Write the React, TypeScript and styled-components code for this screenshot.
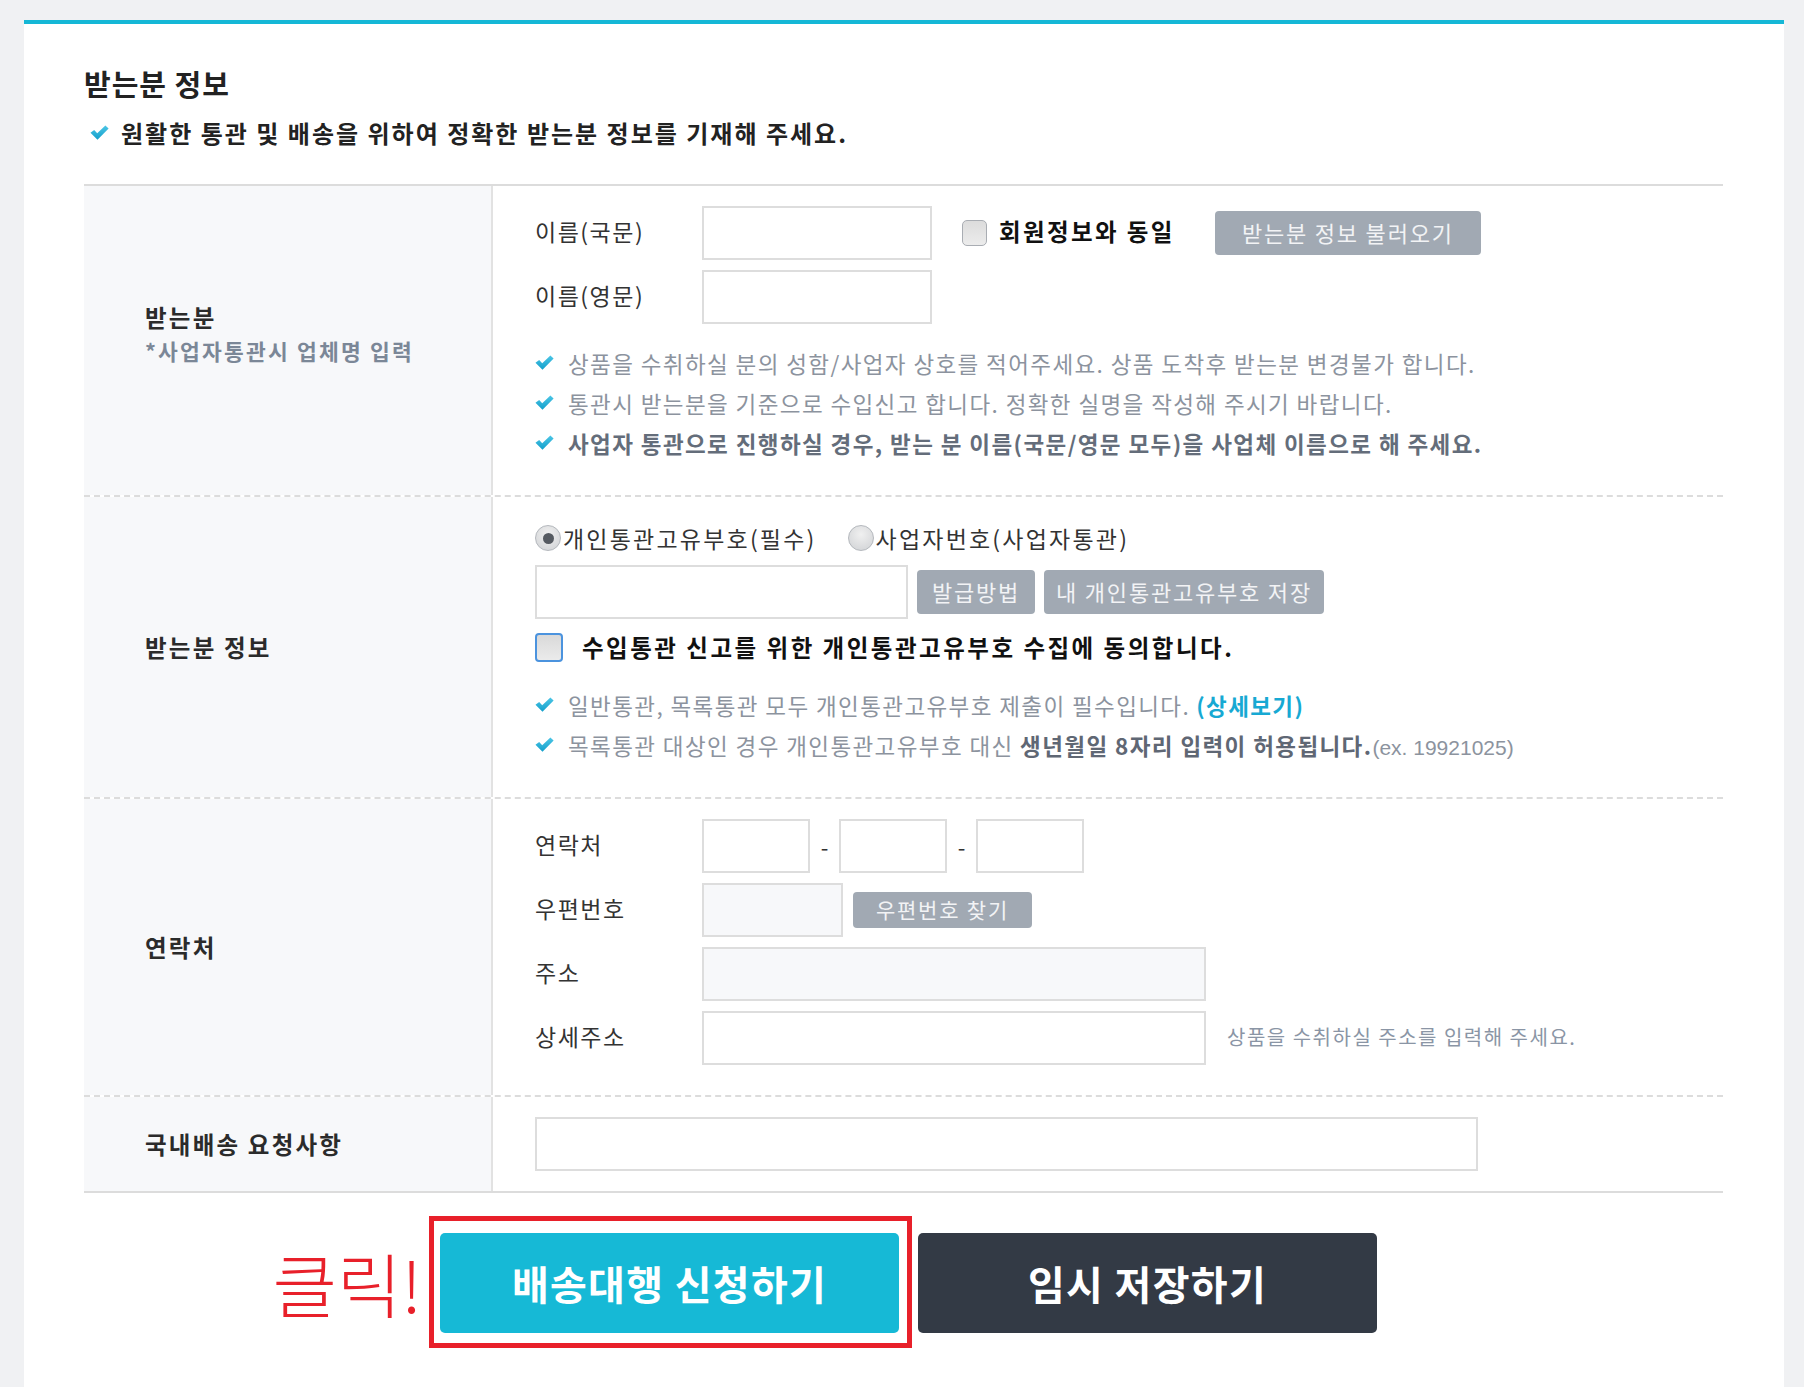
import React from "react";
import styled, { createGlobalStyle, css } from "styled-components";

const FONT = `"Noto Sans CJK KR", "Noto Sans", "Liberation Sans", sans-serif`;

const GlobalStyle = createGlobalStyle`
  html, body { margin: 0; padding: 0; }
  body { background: #f0f1f3; font-family: ${FONT}; color: #333; }
  * { box-sizing: border-box; }
`;

const Page = styled.div`
  min-height: 1387px;
  padding: 20px 20px 0 24px;
`;

const Panel = styled.div`
  background: #fff;
  border-top: 4px solid #15b7d6;
  min-height: 1367px;
  padding: 40px 61px 40px 60px;
`;

const Title = styled.h2`
  margin: 0;
  font-size: 29px;
  line-height: 38px;
  font-weight: 700;
  letter-spacing: 1px;
  color: #222;
`;

const Notice = styled.p`
  margin: 16px 0 0 6px;
  display: flex;
  align-items: center;
  gap: 12px;
  font-size: 24px;
  line-height: 30px;
  font-weight: 700;
  letter-spacing: 2px;
  color: #222;
`;

const Table = styled.div`
  margin-top: 36px;
  border-top: 2px solid #dcdcdc;
  border-bottom: 2px solid #dcdcdc;
`;

const Row = styled.div<{ $first?: boolean }>`
  display: grid;
  grid-template-columns: 409px 1fr;
  ${(p) =>
    !p.$first &&
    css`
      border-top: 2px dashed #dcdcdc;
    `}
`;

const HeadCell = styled.div<{ $lift?: number }>`
  background: #f7f8fa;
  border-right: 2px solid #e2e2e2;
  display: flex;
  flex-direction: column;
  justify-content: center;
  padding-left: 61px;
  padding-bottom: ${(p) => p.$lift ?? 0}px;
`;

const HeadTitle = styled.div`
  font-size: 23.5px;
  line-height: 33px;
  font-weight: 700;
  letter-spacing: 2.2px;
  color: #2b2b2b;
`;

const HeadSub = styled.div`
  font-size: 21.5px;
  line-height: 33px;
  font-weight: 700;
  letter-spacing: 2.2px;
  color: #7b8797;
`;

const BodyCell = styled.div<{ $pad: string }>`
  padding: ${(p) => p.$pad};
  display: flex;
  flex-direction: column;
`;

const FieldStack = styled.div`
  display: flex;
  flex-direction: column;
  gap: 10px;
`;

const FieldLine = styled.div`
  display: flex;
  align-items: center;
  height: 54px;
`;

const FieldLabel = styled.span`
  width: 167px;
  flex: none;
  font-size: 23px;
  letter-spacing: 1.5px;
  color: #333;
  padding-bottom: 5px;
`;

const TextInput = styled.input<{ $w: number; $gray?: boolean }>`
  width: ${(p) => p.$w}px;
  height: 54px;
  flex: none;
  border: 2px solid #dddddd;
  background: ${(p) => (p.$gray ? "#f7f8fa" : "#fff")};
  font-family: ${FONT};
  font-size: 20px;
  padding: 0 10px;
  outline: none;
`;

const SmallCheck = styled.span`
  width: 25px;
  height: 26px;
  margin-left: 30px;
  border: 1.5px solid #a9adb3;
  border-radius: 5px;
  background: linear-gradient(#dcdcdc, #ececec);
  flex: none;
`;

const SameLabel = styled.span`
  margin-left: 12px;
  font-size: 23.5px;
  font-weight: 700;
  letter-spacing: 2.4px;
  color: #111;
  white-space: nowrap;
  padding-bottom: 4px;
`;

const GreyButton = styled.button<{ $w: number; $h?: number; $ml: number }>`
  width: ${(p) => p.$w}px;
  height: ${(p) => p.$h ?? 44}px;
  margin-left: ${(p) => p.$ml}px;
  flex: none;
  border: none;
  border-radius: 4px;
  background: #a1a9b3;
  color: #f2f3f5;
  font-family: ${FONT};
  font-size: ${(p) => ((p.$h ?? 44) < 40 ? 21 : 22)}px;
  letter-spacing: 1.8px;
  white-space: nowrap;
  padding: 0 0 3px;
  cursor: pointer;
`;

const Bullets = styled.ul<{ $mt: number }>`
  list-style: none;
  margin: ${(p) => p.$mt}px 0 0;
  padding: 0;
`;

const Bullet = styled.li<{ $strong?: boolean }>`
  display: flex;
  align-items: center;
  gap: 14px;
  height: 40px;
  font-size: 22.5px;
  letter-spacing: 1.4px;
  color: ${(p) => (p.$strong ? "#646d7a" : "#8c939e")};
  font-weight: ${(p) => (p.$strong ? 700 : 400)};
  white-space: nowrap;
  padding-bottom: 3px;
`;

const Strong = styled.b`
  color: #5f6774;
  font-weight: 700;
`;

const Link = styled.a`
  color: #17a9d3;
  font-weight: 700;
  text-decoration: none;
  margin-left: 6px;
`;

const Latin = styled.span`
  font-family: "Liberation Sans", sans-serif;
  font-size: 21px;
  letter-spacing: 0;
`;

const RadioLine = styled.div`
  display: flex;
  align-items: center;
  height: 34px;
`;

const RadioItem = styled.label<{ $ml?: number }>`
  display: flex;
  align-items: center;
  margin-left: ${(p) => p.$ml ?? 0}px;
  font-size: 23px;
  letter-spacing: 2.2px;
  color: #333;
  white-space: nowrap;
`;

const RadioDot = styled.span<{ $on?: boolean }>`
  width: 26px;
  height: 26px;
  border-radius: 50%;
  border: 1.5px solid #b4b8bd;
  background: radial-gradient(circle at 50% 35%, #f0f0f0, #cfd1d4);
  display: flex;
  align-items: center;
  justify-content: center;
  margin-right: 2px;
  flex: none;
  &::after {
    content: "";
    width: 11px;
    height: 11px;
    border-radius: 50%;
    background: ${(p) => (p.$on ? "#555a61" : "transparent")};
  }
`;

const InputLine = styled.div`
  display: flex;
  align-items: center;
  margin-top: 10px;
`;

const AgreeLine = styled.label`
  display: flex;
  align-items: center;
  margin-top: 11px;
  height: 34px;
  font-size: 23.5px;
  font-weight: 700;
  letter-spacing: 2.5px;
  color: #111;
  gap: 19px;
  white-space: nowrap;
`;

const BigCheck = styled.span`
  width: 28px;
  height: 29px;
  border: 2px solid #4b93de;
  border-radius: 4px;
  background: linear-gradient(#d9d9d9, #ebebeb);
  flex: none;
`;

const Dash = styled.span`
  width: 29px;
  text-align: center;
  font-size: 22px;
  color: #333;
`;

const Hint = styled.span`
  margin-left: 21px;
  font-size: 20px;
  letter-spacing: 1.5px;
  color: #8a95a5;
  white-space: nowrap;
  padding-bottom: 3px;
`;

const Actions = styled.div`
  display: flex;
  justify-content: center;
  gap: 19px;
  margin-top: 40px;
  padding-left: 10px;
`;

const Highlight = styled.div`
  position: relative;
`;

const RedFrame = styled.span`
  position: absolute;
  top: -17px;
  bottom: -15px;
  left: -11px;
  right: -13px;
  border: 5px solid #e8202a;
  pointer-events: none;
`;

const ClickText = styled.span`
  position: absolute;
  right: calc(100% + 18px);
  top: 50%;
  transform: translateY(-50%);
  font-size: 70px;
  line-height: 1;
  font-weight: 300;
  color: #e8202a;
  white-space: nowrap;
`;

const BigButton = styled.button<{ $dark?: boolean }>`
  width: 459px;
  height: 100px;
  border: none;
  border-radius: 5px;
  background: ${(p) => (p.$dark ? "#333a45" : "#16b9d6")};
  color: #fff;
  font-family: ${FONT};
  font-size: 40px;
  font-weight: 700;
  letter-spacing: 1.3px;
  cursor: pointer;
`;

const CheckIcon: React.FC<{ size?: number }> = ({ size = 19 }) => (
  <svg width={size} height={size * 0.8} viewBox="0 0 20 16" style={{ flex: "none" }}>
    <defs>
      <linearGradient id="ckg" x1="0" y1="0" x2="0" y2="1">
        <stop offset="0" stopColor="#4cc6e6" />
        <stop offset="1" stopColor="#139fcb" />
      </linearGradient>
    </defs>
    <path d="M0.5 8.2 L4.4 5.2 L7.6 8.6 L16.2 0.5 L19.6 3.6 L7.9 15.5 Z" fill="url(#ckg)" />
  </svg>
);

export default function App() {
  return (
    <>
      <GlobalStyle />
      <Page>
        <Panel>
          <Title>받는분 정보</Title>
          <Notice>
            <CheckIcon />
            원활한 통관 및 배송을 위하여 정확한 받는분 정보를 기재해 주세요.
          </Notice>

          <Table>
            <Row $first>
              <HeadCell $lift={14}>
                <HeadTitle>받는분</HeadTitle>
                <HeadSub>*사업자통관시 업체명 입력</HeadSub>
              </HeadCell>
              <BodyCell $pad="20px 0 31px 42px">
                <FieldStack>
                  <FieldLine>
                    <FieldLabel>이름(국문)</FieldLabel>
                    <TextInput $w={230} />
                    <SmallCheck />
                    <SameLabel>회원정보와 동일</SameLabel>
                    <GreyButton $w={266} $ml={40}>
                      받는분 정보 불러오기
                    </GreyButton>
                  </FieldLine>
                  <FieldLine>
                    <FieldLabel>이름(영문)</FieldLabel>
                    <TextInput $w={230} />
                  </FieldLine>
                </FieldStack>
                <Bullets $mt={20}>
                  <Bullet>
                    <CheckIcon />
                    상품을 수취하실 분의 성함/사업자 상호를 적어주세요. 상품 도착후 받는분 변경불가 합니다.
                  </Bullet>
                  <Bullet>
                    <CheckIcon />
                    통관시 받는분을 기준으로 수입신고 합니다. 정확한 실명을 작성해 주시기 바랍니다.
                  </Bullet>
                  <Bullet $strong>
                    <CheckIcon />
                    사업자 통관으로 진행하실 경우, 받는 분 이름(국문/영문 모두)을 사업체 이름으로 해 주세요.
                  </Bullet>
                </Bullets>
              </BodyCell>
            </Row>

            <Row>
              <HeadCell>
                <HeadTitle>받는분 정보</HeadTitle>
              </HeadCell>
              <BodyCell $pad="24px 0 31px 42px">
                <RadioLine>
                  <RadioItem>
                    <RadioDot $on />
                    개인통관고유부호(필수)
                  </RadioItem>
                  <RadioItem $ml={31}>
                    <RadioDot />
                    사업자번호(사업자통관)
                  </RadioItem>
                </RadioLine>
                <InputLine>
                  <TextInput $w={373} />
                  <GreyButton $w={118} $ml={9}>
                    발급방법
                  </GreyButton>
                  <GreyButton $w={280} $ml={9}>
                    내 개인통관고유부호 저장
                  </GreyButton>
                </InputLine>
                <AgreeLine>
                  <BigCheck />
                  수입통관 신고를 위한 개인통관고유부호 수집에 동의합니다.
                </AgreeLine>
                <Bullets $mt={22}>
                  <Bullet>
                    <CheckIcon />
                    <span>
                      일반통관, 목록통관 모두 개인통관고유부호 제출이 필수입니다.
                      <Link href="#">(상세보기)</Link>
                    </span>
                  </Bullet>
                  <Bullet>
                    <CheckIcon />
                    <span>
                      목록통관 대상인 경우 개인통관고유부호 대신 <Strong>생년월일 8자리 입력이 허용됩니다.</Strong>
                      <Latin>(ex. 19921025)</Latin>
                    </span>
                  </Bullet>
                </Bullets>
              </BodyCell>
            </Row>

            <Row>
              <HeadCell>
                <HeadTitle>연락처</HeadTitle>
              </HeadCell>
              <BodyCell $pad="20px 0 30px 42px">
                <FieldStack>
                  <FieldLine>
                    <FieldLabel>연락처</FieldLabel>
                    <TextInput $w={108} />
                    <Dash>-</Dash>
                    <TextInput $w={108} />
                    <Dash>-</Dash>
                    <TextInput $w={108} />
                  </FieldLine>
                  <FieldLine>
                    <FieldLabel>우편번호</FieldLabel>
                    <TextInput $w={141} $gray />
                    <GreyButton $w={179} $h={36} $ml={10}>
                      우편번호 찾기
                    </GreyButton>
                  </FieldLine>
                  <FieldLine>
                    <FieldLabel>주소</FieldLabel>
                    <TextInput $w={504} $gray />
                  </FieldLine>
                  <FieldLine>
                    <FieldLabel>상세주소</FieldLabel>
                    <TextInput $w={504} />
                    <Hint>상품을 수취하실 주소를 입력해 주세요.</Hint>
                  </FieldLine>
                </FieldStack>
              </BodyCell>
            </Row>

            <Row>
              <HeadCell>
                <HeadTitle>국내배송 요청사항</HeadTitle>
              </HeadCell>
              <BodyCell $pad="20px 0 20px 42px">
                <TextInput $w={943} />
              </BodyCell>
            </Row>
          </Table>

          <Actions>
            <Highlight>
              <ClickText>클릭!</ClickText>
              <RedFrame />
              <BigButton>배송대행 신청하기</BigButton>
            </Highlight>
            <BigButton $dark>임시 저장하기</BigButton>
          </Actions>
        </Panel>
      </Page>
    </>
  );
}
